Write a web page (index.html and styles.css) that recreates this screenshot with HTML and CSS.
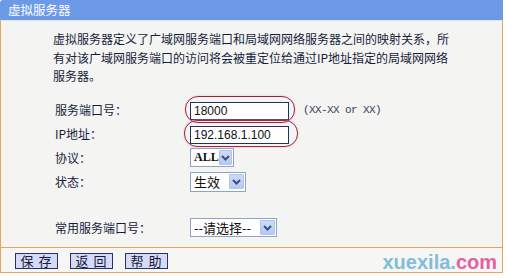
FILE: index.html
```html
<!DOCTYPE html>
<html lang="zh-CN">
<head>
  <meta charset="UTF-8">
  <title>虚拟服务器</title>
  <link rel="stylesheet" href="styles.css">
</head>
<body>

<div class="panel">
  <div class="panel-head">虚拟服务器</div>

  <div class="panel-body">
    <p class="intro">虚拟服务器定义了广域网服务端口和局域网网络服务器之间的映射关系，所<br>有对该广域网服务端口的访问将会被重定位给通过IP地址指定的局域网网络<br>服务器。</p>

    <div class="form">
      <div class="row">
        <label class="lbl">服务端口号：</label>
        <div class="field">
          <span class="mark"><input class="txt" type="text" value="18000"></span>
          <span class="hint">(XX-XX or XX)</span>
        </div>
      </div>
      <div class="row">
        <label class="lbl">IP地址：</label>
        <div class="field">
          <span class="mark mark-wide"><input class="txt" type="text" value="192.168.1.100"></span>
        </div>
      </div>
      <div class="row">
        <label class="lbl">协议：</label>
        <div class="field">
          <div class="sel sel-all"><span class="sel-val">ALL</span><span class="sel-btn"><svg width="9" height="6" viewBox="0 0 9 6"><path d="M1 1 L4.5 4.5 L8 1" fill="none" stroke="#3c4f7c" stroke-width="2"/></svg></span></div>
        </div>
      </div>
      <div class="row">
        <label class="lbl">状态：</label>
        <div class="field">
          <div class="sel sel-state"><span class="sel-val">生效</span><span class="sel-btn"><svg width="9" height="6" viewBox="0 0 9 6"><path d="M1 1 L4.5 4.5 L8 1" fill="none" stroke="#3c4f7c" stroke-width="2"/></svg></span></div>
        </div>
      </div>
      <div class="row row-gap">
        <label class="lbl">常用服务端口号：</label>
        <div class="field">
          <div class="sel sel-common"><span class="sel-val">--请选择--</span><span class="sel-btn"><svg width="9" height="6" viewBox="0 0 9 6"><path d="M1 1 L4.5 4.5 L8 1" fill="none" stroke="#3c4f7c" stroke-width="2"/></svg></span></div>
        </div>
      </div>
    </div>
  </div>

  <div class="panel-foot">
    <button class="btn">保 存</button>
    <button class="btn">返 回</button>
    <button class="btn">帮 助</button>
    <span class="watermark">xuexila.<em>com</em></span>
  </div>
</div>

</body>
</html>
```

FILE: styles.css
```css
body {
  margin: 0;
  background: #fff;
  font-family: "Noto Sans CJK SC", "Liberation Sans", sans-serif;
  font-size: 12px;
  color: #161d3a;
}

.panel {
  width: 503px;
}

.panel-head {
  height: 20px;
  line-height: 20px;
  padding-left: 8px;
  background: #6d9ae6;
  color: #fff;
  font-size: 12.5px;
  border-top-left-radius: 3px;
}

.panel-body {
  height: 227px;
  box-sizing: border-box;
  padding: 9px 0 0 52px;
  background: #f4f4f3;
  border-left: 1px solid #e4a55e;
  border-right: 1px solid #e4a55e;
  border-top: 1px solid #dde6f5;
}

.intro {
  margin: 0;
  line-height: 18.5px;
}

.form {
  margin-top: 12px;
  padding-left: 2px;
}

.row {
  display: flex;
  align-items: center;
  height: 24px;
}

.row-gap {
  margin-top: 22px;
}

.lbl {
  width: 135px;
  flex: none;
}

.field {
  display: flex;
  align-items: center;
}

.mark {
  position: relative;
  display: block;
  height: 18px;
}

.mark::after {
  content: "";
  position: absolute;
  top: -5px;
  bottom: -4px;
  left: -5px;
  right: -6px;
  border: 1.5px solid #9c2440;
  border-radius: 13px;
  box-shadow: 0 0 2px #f0b0c0;
  pointer-events: none;
}

.mark-wide::after {
  left: -6px;
  right: -9px;
}

.txt {
  width: 99px;
  height: 18px;
  box-sizing: border-box;
  margin: 0;
  padding: 0 3px;
  border: 1px solid #22305e;
  background: #fff;
  font-family: "Liberation Sans", sans-serif;
  font-size: 12px;
  color: #111;
  outline: none;
}

.hint {
  margin-left: 14px;
  font-family: "Liberation Mono", monospace;
  font-size: 11px;
  letter-spacing: -0.6px;
  color: #3a4160;
}

.sel {
  display: flex;
  align-items: center;
  justify-content: space-between;
  box-sizing: border-box;
  height: 19px;
  padding: 0 1px 0 3px;
  border: 1px solid #8fa3c4;
  background: #fff;
  color: #111;
}

.sel-all {
  width: 44px;
  font-family: "Liberation Serif", serif;
  font-weight: bold;
}

.sel-state {
  width: 56px;
  height: 20px;
  font-size: 13px;
}

.sel-common {
  width: 87px;
  font-size: 13px;
}

.sel-btn {
  display: flex;
  align-items: center;
  justify-content: center;
  width: 15px;
  height: 15px;
  background: linear-gradient(#cddbfb, #b5c9f3);
  border: 1px solid #b1c3ea;
  box-sizing: border-box;
  border-radius: 1px;
}

.panel-foot {
  position: relative;
  display: flex;
  align-items: center;
  gap: 12px;
  height: 26px;
  box-sizing: border-box;
  padding: 0 0 0 14px;
  background: #f6f6f5;
  border: 1px solid #e4a55e;
}

.btn {
  width: 43px;
  height: 16px;
  padding: 0;
  margin-top: 2px;
  border: 1px solid #26336a;
  background: #d7daf6;
  font-family: "Noto Sans CJK SC", sans-serif;
  font-size: 13px;
  line-height: 14px;
  color: #141a3a;
  letter-spacing: 1px;
}

.watermark {
  position: absolute;
  right: 5px;
  bottom: -2px;
  font-family: "Liberation Sans", sans-serif;
  font-weight: bold;
  font-size: 20px;
  color: #82bdd9;
}

.watermark em {
  font-style: normal;
  color: #e2639f;
}
```
